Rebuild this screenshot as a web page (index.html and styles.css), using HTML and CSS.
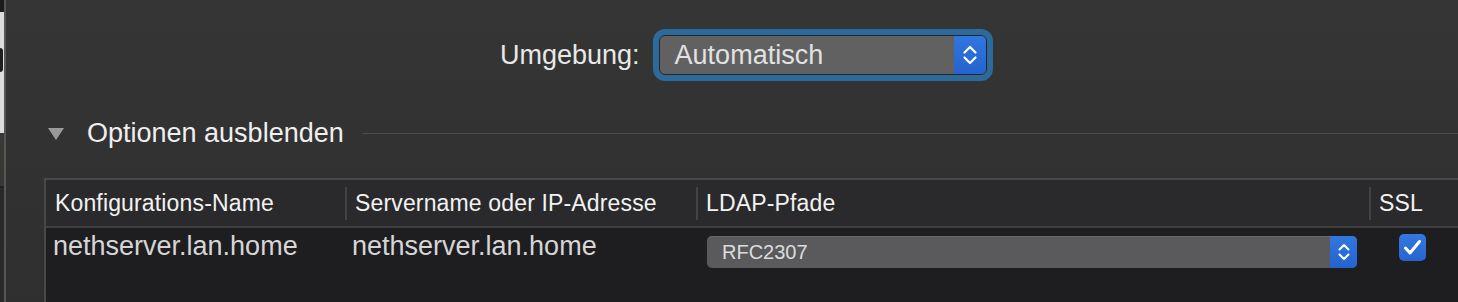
FILE: index.html
```html
<!DOCTYPE html>
<html lang="de">
<head>
    <meta charset="UTF-8">
    <meta name="viewport" content="width=device-width, initial-scale=1.0">
    <title>Verzeichnisdienste</title>
    <link rel="stylesheet" href="styles.css">
</head>
<body>
    <div class="screen">
        <!-- sliver of the window behind -->
        <div class="edge">
            <div class="edge-top"></div>
            <div class="edge-light"><span class="edge-glyph"></span></div>
            <div class="edge-mid"></div>
            <div class="edge-low"></div>
        </div>
        <div class="edge-line"></div>

        <main class="window">
            <div class="location-row">
                <label class="location-label">Umgebung:</label>
                <div class="popup popup-large popup-focus">
                    <span class="popup-value">Automatisch</span>
                    <span class="popup-arrows">
                        <svg width="16" height="22" viewBox="0 0 16 22">
                            <path d="M2.5 8.5 L8 3 L13.5 8.5 M2.5 13.5 L8 19 L13.5 13.5" fill="none" stroke="#fff" stroke-width="2.2" stroke-linecap="round" stroke-linejoin="round"/>
                        </svg>
                    </span>
                </div>
            </div>

            <div class="disclosure">
                <span class="disclosure-triangle"></span>
                <span class="disclosure-title">Optionen ausblenden</span>
                <span class="disclosure-rule"></span>
            </div>

            <div class="config-table">
                <div class="table-head">
                    <div class="head-cell">Konfigurations-Name</div>
                    <div class="head-cell">Servername oder IP-Adresse</div>
                    <div class="head-cell">LDAP-Pfade</div>
                    <div class="head-cell">SSL</div>
                </div>
                <div class="table-row">
                    <div class="row-cell cell-text">nethserver.lan.home</div>
                    <div class="row-cell cell-text">nethserver.lan.home</div>
                    <div class="row-cell cell-popup">
                        <div class="popup popup-small">
                            <span class="popup-value">RFC2307</span>
                            <span class="popup-arrows">
                                <svg width="14" height="20" viewBox="0 0 14 20">
                                    <path d="M2.5 7.5 L7 3 L11.5 7.5 M2.5 12.5 L7 17 L11.5 12.5" fill="none" stroke="#fff" stroke-width="2" stroke-linecap="round" stroke-linejoin="round"/>
                                </svg>
                            </span>
                        </div>
                    </div>
                    <div class="row-cell cell-check">
                        <span class="checkbox">
                            <svg width="27" height="27" viewBox="0 0 27 27">
                                <path d="M6.5 14 L11 19 L20.5 7.5" fill="none" stroke="#fff" stroke-width="3" stroke-linecap="round" stroke-linejoin="round"/>
                            </svg>
                        </span>
                    </div>
                </div>
            </div>
        </main>
    </div>
</body>
</html>
```

FILE: styles.css
```css
/* --- General Setup --- */
:root {
    --window-bg: #313131;
    --text-color: #ececec;
    --muted-text: #d6d6d6;
    --accent-blue: #2b6bd5;
    --focus-ring: #2b6a9b;
    --table-line: #48484a;
}

body {
    margin: 0;
    font-family: 'Liberation Sans', Arial, sans-serif;
    background-color: var(--window-bg);
    color: var(--text-color);
}

.screen {
    display: flex;
    width: 1458px;
    height: 302px;
    overflow: hidden;
}

/* --- Edge of the window behind --- */
.edge {
    width: 4px;
    display: flex;
    flex-direction: column;
}

.edge-top {
    height: 12px;
    background-color: #1c1c1c;
}

.edge-light {
    height: 121px;
    background-color: #dcdcdc;
    padding-top: 36px;
    box-sizing: border-box;
}

.edge-glyph {
    display: block;
    width: 3px;
    height: 24px;
    background-color: #1e1e1e;
    border-radius: 0 3px 3px 0;
}

.edge-mid {
    height: 53px;
    background-color: #3a3835;
    border-bottom: 2px solid #222;
}

.edge-low {
    flex: 1;
    background-color: #2b2a28;
}

.edge-line {
    width: 2px;
    background-color: #565656;
}

/* --- Main window --- */
.window {
    flex: 1;
    min-width: 0;
    overflow: hidden;
    padding-top: 35px;
    background-image: linear-gradient(to bottom, #363535, #2f2f2f);
}

.location-row {
    display: flex;
    align-items: center;
    padding-left: 494px;
}

.location-label {
    font-size: 27px;
    color: #e8e8e8;
    margin-right: 19px;
}

/* --- Popup buttons --- */
.popup {
    display: flex;
    align-items: stretch;
    box-sizing: border-box;
}

.popup-value {
    flex: 1;
    display: flex;
    align-items: center;
}

.popup-arrows {
    display: flex;
    align-items: center;
    justify-content: center;
    background-image: linear-gradient(to bottom, #3176de, #2563cf);
}

.popup-large {
    width: 328px;
    height: 40px;
    background-color: #616161;
    border: 1px solid #262626;
    border-radius: 6px;
}

.popup-large .popup-value {
    padding-left: 15px;
    font-size: 27px;
    color: #e2e2e2;
}

.popup-large .popup-arrows {
    width: 32px;
    border-radius: 0 5px 5px 0;
}

.popup-focus {
    box-shadow: 0 0 0 6px var(--focus-ring);
}

.popup-small {
    width: 650px;
    height: 32px;
    background-color: #5a5a5c;
    border-top: 1px solid #6a6a6c;
    border-radius: 5px;
}

.popup-small .popup-value {
    padding-left: 15px;
    font-size: 20px;
    color: #dcdcdc;
}

.popup-small .popup-arrows {
    width: 27px;
    margin-top: -1px;
    border-radius: 0 5px 5px 0;
}

/* --- Disclosure --- */
.disclosure {
    display: flex;
    align-items: center;
    height: 30px;
    margin-top: 43px;
    padding-left: 42px;
}

.disclosure-triangle {
    width: 0;
    height: 0;
    border-left: 8.5px solid transparent;
    border-right: 8.5px solid transparent;
    border-top: 12px solid #9a9a9a;
    margin-top: 2px;
}

.disclosure-title {
    margin-left: 23px;
    font-size: 27px;
    color: #efefef;
}

.disclosure-rule {
    flex: 1;
    height: 1px;
    margin-left: 18px;
    background-color: #4b4b4b;
}

/* --- Configurations table --- */
.config-table {
    margin-top: 30px;
    margin-left: 38px;
    width: 1500px;
    height: 200px;
    border-top: 2px solid var(--table-line);
    border-left: 2px solid var(--table-line);
    background-color: #1e1e20;
}

.table-head,
.table-row {
    display: grid;
    grid-template-columns: 299px 351px 673px 1fr;
}

.table-head {
    height: 46px;
    background-color: #2a2a2d;
    border-bottom: 2px solid #3f3f42;
}

.head-cell {
    display: flex;
    align-items: center;
    padding-left: 9px;
    font-size: 23px;
    letter-spacing: 0.15px;
    color: #f2f2f2;
}

.head-cell + .head-cell {
    padding-left: 0;
}

.head-cell + .head-cell::before {
    content: "";
    width: 2px;
    height: 33px;
    margin-right: 8px;
    background-color: #434346;
}

.cell-text {
    padding: 2px 0 0 7px;
    font-size: 27px;
    line-height: 32px;
    color: var(--muted-text);
}

.cell-popup {
    padding: 8px 0 0 11px;
}

.cell-check {
    padding: 6px 0 0 30px;
}

.checkbox {
    display: block;
    width: 27px;
    height: 27px;
    border-radius: 5px;
    background-image: linear-gradient(to bottom, #3478e0, #2864cf);
}

.checkbox svg {
    display: block;
}
```
